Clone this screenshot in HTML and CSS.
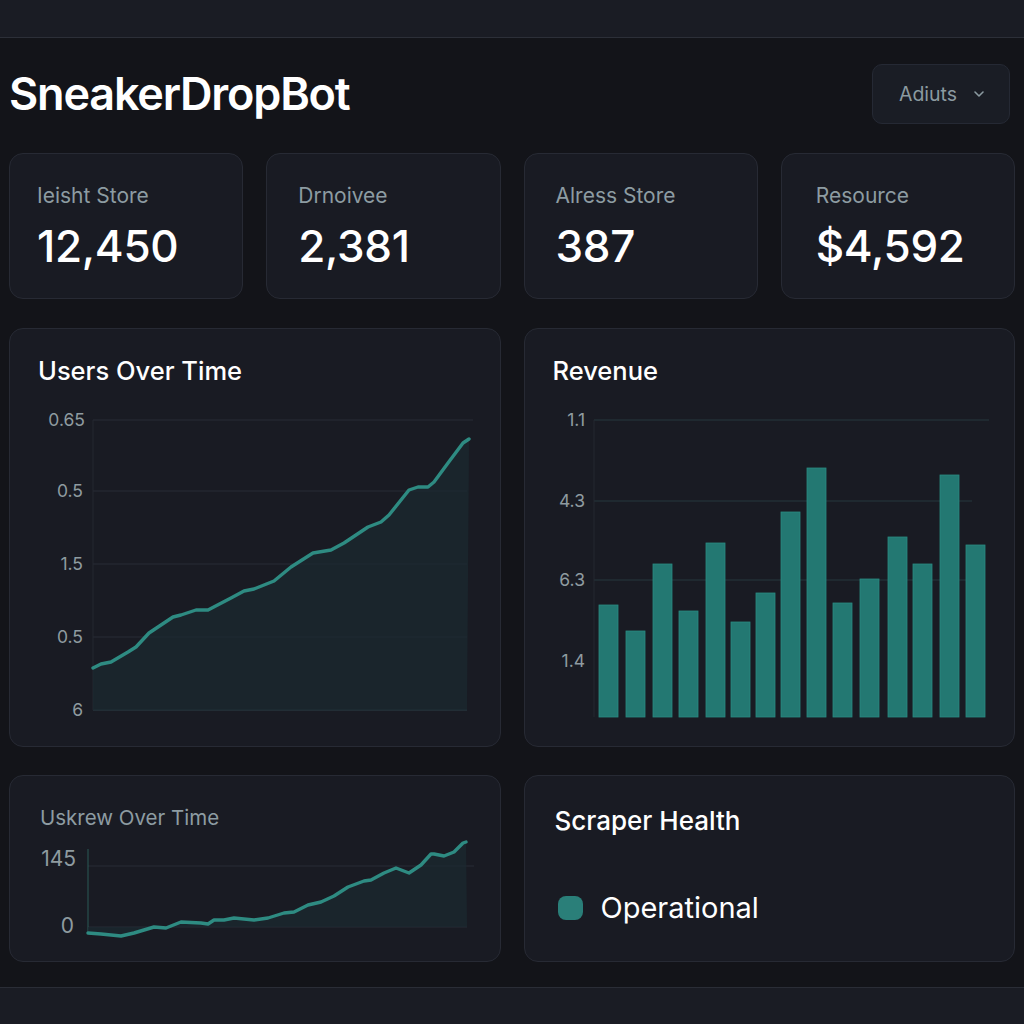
FILE: index.html
```html
<!DOCTYPE html>
<html lang="en">
<head>
<meta charset="utf-8">
<title>SneakerDropBot</title>
<link rel="stylesheet" href="styles.css">
</head>
<body>
<div class="topbar"></div>
<main class="main">
  <header class="header">
    <h1 class="brand">SneakerDropBot</h1>
    <button class="select">Adiuts <svg class="chev" width="12" height="8" viewBox="0 0 12 8"><path d="M2 2 L6 6 L10 2" fill="none" stroke="#8b9aa0" stroke-width="1.6" stroke-linecap="round" stroke-linejoin="round"/></svg></button>
  </header>

  <section class="stats">
    <div class="stat-half">
      <div class="card stat"><div class="stat-label">Ieisht Store</div><div class="stat-value">12,450</div></div>
      <div class="card stat s2"><div class="stat-label">Drnoivee</div><div class="stat-value">2,381</div></div>
    </div>
    <div class="stat-half">
      <div class="card stat s2"><div class="stat-label">Alress Store</div><div class="stat-value">387</div></div>
      <div class="card stat s4"><div class="stat-label">Resource</div><div class="stat-value">$4,592</div></div>
    </div>
  </section>

  <section class="row charts">
    <div class="card chart-card">
      <h2 class="card-title">Users Over Time</h2>
      <svg class="chart" width="433" height="320" viewBox="0 0 433 320">
        <g class="grid">
          <line x1="55" y1="15" x2="435" y2="15"/>
          <line x1="55" y1="86" x2="429" y2="86"/>
          <line x1="55" y1="159" x2="429" y2="159"/>
          <line x1="55" y1="232" x2="429" y2="232"/>
          <line x1="55" y1="305" x2="429" y2="305" class="axis"/>
          <line x1="55" y1="15" x2="55" y2="305" class="axis faint"/>
        </g>
        <g class="ylabels" text-anchor="end">
          <text x="47" y="21">0.65</text>
          <text x="45" y="92">0.5</text>
          <text x="45" y="165">1.5</text>
          <text x="45" y="238">0.5</text>
          <text x="45" y="311">6</text>
        </g>
        <polygon class="area" points="55,263 63,259 73,257 90,247 98,242 111,228 135,212 143,210 158,205 170,205 193,193 206,186 216,184 236,176 253,162 275,148 293,145 306,138 330,122 343,117 351,110 371,85 380,82 390,82 396,77 410,58 425,38 431,34 429,305 55,305"/>
        <polyline class="line" points="55,263 63,259 73,257 90,247 98,242 111,228 135,212 143,210 158,205 170,205 193,193 206,186 216,184 236,176 253,162 275,148 293,145 306,138 330,122 343,117 351,110 371,85 380,82 390,82 396,77 410,58 425,38 431,34"/>
      </svg>
    </div>
    <div class="card chart-card">
      <h2 class="card-title">Revenue</h2>
      <svg class="chart" width="433" height="320" viewBox="0 0 433 320">
        <g class="grid">
          <line x1="41" y1="15" x2="436" y2="15" class="teal"/>
          <line x1="41" y1="96" x2="419" y2="96" class="teal"/>
          <line x1="41" y1="175" x2="432" y2="175" class="teal"/>
          <line x1="41" y1="15" x2="41" y2="312" class="axis faint"/>
        </g>
        <g class="ylabels" text-anchor="end">
          <text x="32" y="21">1.1</text>
          <text x="32" y="102">4.3</text>
          <text x="32" y="181">6.3</text>
          <text x="32" y="262">1.4</text>
        </g>
        <g class="bars">
          <rect x="46" y="200" width="19" height="112"/>
          <rect x="73" y="226" width="19" height="86"/>
          <rect x="100" y="159" width="19" height="153"/>
          <rect x="126" y="206" width="19" height="106"/>
          <rect x="153" y="138" width="19" height="174"/>
          <rect x="178" y="217" width="19" height="95"/>
          <rect x="203" y="188" width="19" height="124"/>
          <rect x="228" y="107" width="19" height="205"/>
          <rect x="254" y="63" width="19" height="249"/>
          <rect x="280" y="198" width="19" height="114"/>
          <rect x="307" y="174" width="19" height="138"/>
          <rect x="335" y="132" width="19" height="180"/>
          <rect x="360" y="159" width="19" height="153"/>
          <rect x="387" y="70" width="19" height="242"/>
          <rect x="413" y="140" width="19" height="172"/>
        </g>
      </svg>
    </div>
  </section>

  <section class="row bottom">
    <div class="card small-card">
      <h3 class="small-title">Uskrew Over Time</h3>
      <svg class="chart" width="430" height="100" viewBox="0 0 430 100">
        <g class="grid">
          <line x1="47" y1="25" x2="433" y2="25"/>
          <line x1="47" y1="86" x2="426" y2="86"/>
          <line x1="47" y1="8" x2="47" y2="92" class="teal-axis"/>
        </g>
        <g class="ylabels big" text-anchor="end">
          <text x="35" y="25">145</text>
          <text x="33" y="92">0</text>
        </g>
        <polygon class="area" points="47,92 60,93 80,95 93,92 113,86 125,87 140,81 160,82 167,83 173,79 183,79 193,77 213,79 227,77 243,72 253,71 267,64 280,61 293,55 307,46 323,40 330,39 343,32 355,27 368,32 380,24 390,13 393,13 403,15 413,11 422,2 425,1 426,86 47,86"/>
        <polyline class="line" points="47,92 60,93 80,95 93,92 113,86 125,87 140,81 160,82 167,83 173,79 183,79 193,77 213,79 227,77 243,72 253,71 267,64 280,61 293,55 307,46 323,40 330,39 343,32 355,27 368,32 380,24 390,13 393,13 403,15 413,11 422,2 425,1"/>
      </svg>
    </div>
    <div class="card health-card">
      <h2 class="card-title health-title">Scraper Health</h2>
      <div class="status"><span class="dot"></span><span class="status-text">Operational</span></div>
    </div>
  </section>
</main>
<div class="bottombar"></div>
</body>
</html>
```

FILE: styles.css
```css
* { box-sizing: border-box; }
html, body {
  margin: 0;
  padding: 0;
  background: #131419;
  font-family: Inter, "Noto Sans", "Liberation Sans", sans-serif;
  color: #ffffff;
}
.topbar {
  height: 38px;
  background: #1a1c24;
  border-bottom: 1px solid #2c2f38;
}
.main {
  padding: 0 9px;
}
.header {
  display: flex;
  justify-content: space-between;
  align-items: center;
  height: 60px;
  margin-top: 26px;
}
.brand {
  margin: 0;
  font-size: 45px;
  font-weight: 600;
  letter-spacing: -1.2px;
  line-height: 60px;
  color: #ffffff;
}
.select {
  width: 138px;
  height: 60px;
  margin-right: 5px;
  background: #1a1d25;
  border: 1px solid #252934;
  border-radius: 10px;
  color: #8b9aa0;
  font-family: inherit;
  font-size: 19.5px;
  display: flex;
  align-items: center;
  justify-content: center;
  gap: 16px;
  padding: 0 0 0 2px;
}
.chev { display: block; }
.card {
  background: #191b23;
  border: 1px solid #272a34;
  border-radius: 14px;
  min-width: 0;
  overflow: hidden;
}
.stats {
  margin-top: 29px;
  display: grid;
  grid-template-columns: minmax(0, 1fr) minmax(0, 1fr);
  gap: 23px;
}
.stat-half {
  display: grid;
  grid-template-columns: minmax(0, 1fr) minmax(0, 1fr);
  gap: 23px;
}
.stat {
  height: 146px;
  padding: 30px 27px 0;
}
.stat.s2 { padding-left: 31px; }
.stat.s4 { padding-left: 34px; }
.stat-label {
  font-size: 21px;
  line-height: 24px;
  color: #8d9ca2;
  white-space: nowrap;
}
.stat-value {
  margin-top: 13px;
  font-size: 44px;
  line-height: 50px;
  font-weight: 500;
  letter-spacing: -0.3px;
  color: #ffffff;
}
.row {
  display: grid;
  grid-template-columns: minmax(0, 1fr) minmax(0, 1fr);
  gap: 23px;
}
.charts { margin-top: 29px; }
.chart-card {
  height: 419px;
  padding: 26px 28px 0;
}
.card-title {
  margin: 0;
  font-size: 25.5px;
  line-height: 31px;
  font-weight: 500;
  color: #ffffff;
}
.chart {
  display: block;
  margin-top: 19px;
  overflow: visible;
}
.grid line {
  stroke: #282d36;
  stroke-width: 1;
}
.grid line.axis { stroke: #2c4148; }
.grid line.faint { stroke: #242931; }
.grid line.teal { stroke: #26393f; }
.grid line.teal-axis { stroke: #2a5a57; }
.ylabels text {
  font-family: Inter, "Noto Sans", sans-serif;
  font-size: 17.5px;
  fill: #8f9ba0;
}
.ylabels.big text { font-size: 21px; }
.area {
  fill: #1b2a30;
  fill-opacity: 0.75;
}
.line {
  fill: none;
  stroke: #2e8b82;
  stroke-width: 3.4;
  stroke-linejoin: round;
  stroke-linecap: round;
}
.bars rect {
  fill: #237872;
  stroke: #2a8a82;
  stroke-width: 0.8;
}
.bottom { margin-top: 28px; }
.small-card {
  height: 187px;
  padding: 30px 0 0 0;
}
.small-title {
  margin: 0 0 0 30px;
  font-size: 20.5px;
  line-height: 24px;
  font-weight: 400;
  color: #8d9ca2;
}
.small-card .chart {
  margin-top: 11px;
  margin-left: 31px;
}
.health-card {
  height: 187px;
  padding: 29px 30px 0;
}
.health-title { font-size: 26px; }
.status {
  margin-top: 55px;
  display: flex;
  align-items: center;
  gap: 18px;
}
.dot {
  width: 25px;
  height: 24px;
  margin-left: 3px;
  border-radius: 8px;
  background: #2a7f79;
}
.status-text {
  font-size: 29px;
  line-height: 34px;
  color: #ffffff;
}
.bottombar {
  margin-top: 25px;
  height: 37px;
  background: #1a1c24;
  border-top: 1px solid #2a2d36;
}
```
